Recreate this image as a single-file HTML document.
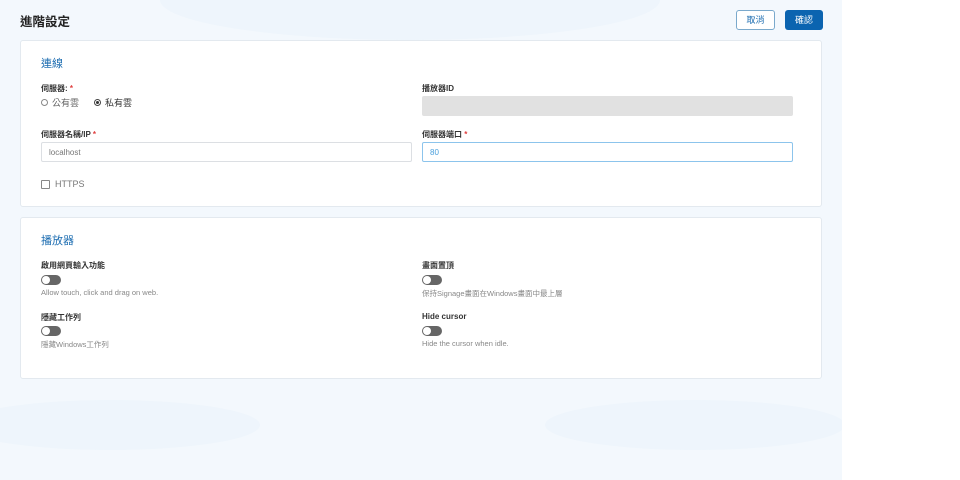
<!DOCTYPE html>
<html><head><meta charset="utf-8"><style>
*{box-sizing:border-box;margin:0;padding:0}
body{width:960px;height:480px;background:#fff;font-family:"Liberation Sans","Noto Sans CJK TC",sans-serif;position:relative;overflow:hidden}
.main{position:absolute;left:0;top:0;width:842px;height:480px;background:#f3f8fd;overflow:hidden}
.blob{position:absolute;border-radius:50%;background:#eef5fc}
.abs{position:absolute}
.card{position:absolute;left:20px;width:802px;background:#fff;border:1px solid #e3e9ef;border-radius:3px}
.h{position:absolute;left:20px;font-size:11px;color:#1a6bb0}
.lbl{position:absolute;font-size:8px;font-weight:bold;color:#333}
.req{color:#e04040}
.inp{position:absolute;height:20px;border:1px solid #dcdfe3;border-radius:2px;font-size:8px;color:#777;padding:5px 7px;background:#fff}
.tg{position:absolute;width:20px;height:10px;border-radius:5px;background:#666}
.tg::after{content:"";position:absolute;left:1px;top:1px;width:8px;height:8px;border-radius:50%;background:#fff}
.desc{position:absolute;font-size:7.5px;color:#888}
</style></head><body>
<div class="main">
<div class="blob" style="left:160px;top:-40px;width:500px;height:80px"></div>
<div class="blob" style="left:545px;top:400px;width:300px;height:50px"></div>
<div class="blob" style="left:-40px;top:400px;width:300px;height:50px"></div>
<div class="abs" style="left:20px;top:11px;font-size:12.5px;font-weight:bold;color:#222">進階設定</div>
<div class="abs" style="left:736px;top:10px;width:39px;height:20px;border:1px solid #7aa9cc;border-radius:3px;font-size:9px;color:#1a6bb0;text-align:center;line-height:18px;background:#fff">取消</div>
<div class="abs" style="left:785px;top:10px;width:38px;height:20px;background:#0b64b0;border-radius:3px;font-size:9px;color:#fff;text-align:center;line-height:20px">確認</div>
<div class="card" style="top:40px;height:167px">
 <div class="h" style="top:14px">連線</div>
 <div class="lbl" style="left:20px;top:42px">伺服器: <span class="req">*</span></div>
 <div class="abs" style="left:20px;top:55px;font-size:9px;color:#666;display:flex;align-items:center"><span style="width:7px;height:7px;border:1px solid #888;border-radius:50%;margin-right:4px"></span>公有雲<span style="width:7px;height:7px;border:1px solid #444;border-radius:50%;margin:0 4px 0 15px;display:flex;align-items:center;justify-content:center"><span style="width:3px;height:3px;background:#333;border-radius:50%"></span></span><span style="color:#333">私有雲</span></div>
 <div class="lbl" style="left:401px;top:42px">播放器ID</div>
 <div class="abs" style="left:401px;top:55px;width:371px;height:20px;background:#e1e1e1;border-radius:2px"></div>
 <div class="lbl" style="left:20px;top:88px">伺服器名稱/IP <span class="req">*</span></div>
 <div class="inp" style="left:20px;top:101px;width:371px">localhost</div>
 <div class="lbl" style="left:401px;top:88px">伺服器端口 <span class="req">*</span></div>
 <div class="inp" style="left:401px;top:101px;width:371px;border-color:#8cc4ec;color:#4aa0dd">80</div>
 <div class="abs" style="left:20px;top:139px;width:9px;height:9px;border:1px solid #888;border-radius:1px"></div>
 <div class="abs" style="left:34px;top:138px;font-size:9px;color:#777">HTTPS</div>
</div>
<div class="card" style="top:217px;height:162px">
 <div class="h" style="top:14px">播放器</div>
 <div class="lbl" style="left:20px;top:42px">啟用網頁輸入功能</div>
 <div class="tg" style="left:20px;top:57px"></div>
 <div class="desc" style="left:20px;top:70px">Allow touch, click and drag on web.</div>
 <div class="lbl" style="left:401px;top:42px">畫面置頂</div>
 <div class="tg" style="left:401px;top:57px"></div>
 <div class="desc" style="left:401px;top:70px">保持Signage畫面在Windows畫面中最上層</div>
 <div class="lbl" style="left:20px;top:94px">隱藏工作列</div>
 <div class="tg" style="left:20px;top:108px"></div>
 <div class="desc" style="left:20px;top:121px">隱藏Windows工作列</div>
 <div class="lbl" style="left:401px;top:94px">Hide cursor</div>
 <div class="tg" style="left:401px;top:108px"></div>
 <div class="desc" style="left:401px;top:121px">Hide the cursor when idle.</div>
</div>
</div>
</body></html>
